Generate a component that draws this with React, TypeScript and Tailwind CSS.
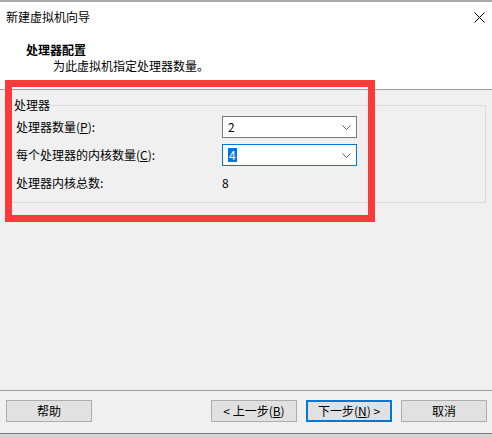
const font = { fontFamily: '"Noto Sans CJK SC", "Noto Sans", sans-serif' };

const Combo = ({ value, focused }: { value: string; focused?: boolean }) => (
  <div
    className={`flex h-[22px] w-[135px] items-center justify-between bg-white pl-[5px] pr-[5px] border ${
      focused ? "border-[#0078d7]" : "border-[#7a7a7a]"
    }`}
  >
    {focused ? (
      <span className="bg-[#0078d7] px-px leading-[14px] text-white">{value}</span>
    ) : (
      <span className="leading-[14px]">{value}</span>
    )}
    <svg width="9" height="5" viewBox="0 0 9 5" className="mt-px">
      <path d="M0.5 0.5 L4.5 4.5 L8.5 0.5" fill="none" stroke="#606060" strokeWidth="1" />
    </svg>
  </div>
);

const WinButton = ({ children, primary }: { children: React.ReactNode; primary?: boolean }) => (
  <button
    className={`flex h-[22px] w-[86px] items-center justify-center bg-[#e1e1e1] text-[12px] ${
      primary ? "border-2 border-[#0078d7]" : "border border-[#adadad]"
    }`}
  >
    {children}
  </button>
);

export default function App() {
  return (
    <div
      className="relative flex h-[437px] w-[492px] flex-col bg-[#f0f0f0] text-[12px] text-black"
      style={font}
    >
      {/* header */}
      <div className="relative h-[90px] shrink-0 border-t-2 border-b border-t-[#a8a8a8] border-b-[#a0a0a0] bg-white">
        <div className="pl-[6px] pt-[7px] leading-[16px]">新建虚拟机向导</div>
        <svg className="absolute right-[7px] top-[10px]" width="11" height="11" viewBox="0 0 11 11">
          <path d="M0.5 0.5 L10.5 10.5 M10.5 0.5 L0.5 10.5" stroke="#000" strokeWidth="1" />
        </svg>
        <div className="pl-[26px] pt-[17px] font-bold leading-[16px]">处理器配置</div>
        <div className="pl-[53px] pt-0 leading-[16px]">为此虚拟机指定处理器数量。</div>
      </div>

      {/* body */}
      <div className="flex-1 px-[9px] pt-[7px]">
        <fieldset className="w-[477px] border border-[#dcdcdc] pl-[6px] pb-[8px]">
          <legend className="-ml-[2px] leading-[16px]">处理器</legend>
          <div className="mt-[3px] flex flex-col gap-[6px]">
            <div className="flex h-[22px] items-center">
              <span className="w-[206px]">
                处理器数量(<u>P</u>):
              </span>
              <Combo value="2" />
            </div>
            <div className="flex h-[22px] items-center">
              <span className="w-[206px]">
                每个处理器的内核数量(<u>C</u>):
              </span>
              <Combo value="4" focused />
            </div>
            <div className="flex h-[22px] items-center">
              <span className="w-[206px]">处理器内核总数:</span>
              <span>8</span>
            </div>
          </div>
        </fieldset>
      </div>

      {/* footer */}
      <div className="h-[43px] shrink-0 border-t border-[#a0a0a0]">
        <div className="flex items-center pl-[6px] pt-[9px]">
          <WinButton>帮助</WinButton>
          <div className="ml-[119px] flex gap-[9px]">
            <WinButton>
              &lt; 上一步(<u>B</u>)
            </WinButton>
            <WinButton primary>
              下一步(<u>N</u>) &gt;
            </WinButton>
            <WinButton>取消</WinButton>
          </div>
        </div>
      </div>
      <div className="h-[4px] shrink-0 border-t border-[#7d7d7d] bg-[#d6d6d6]" />

      {/* annotation */}
      <div className="pointer-events-none absolute left-[5px] top-[80px] h-[142px] w-[370px] border-[7px] border-[#fd3a3a]" />
    </div>
  );
}
